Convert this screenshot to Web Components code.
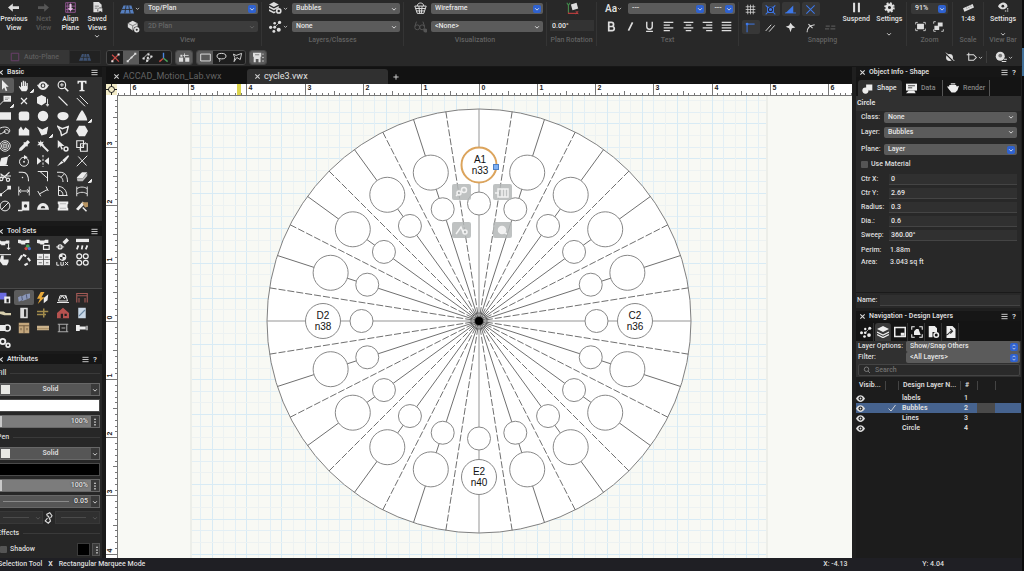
<!DOCTYPE html>
<html lang="en">
<head>
<meta charset="utf-8">
<title>cycle3.vwx</title>
<style>
  html, body { height: 100%; }
  body {
    margin: 0;
    overflow: hidden;
    background: linear-gradient(#0b0b0c 48px, #3f6f99 48px 76px, #0b0b0c 76px);
    color: #dedede;
    font: 500 7px/9px Roboto, "Liberation Sans", sans-serif;
  }
</style>
</head>
<body>
<cad-app></cad-app>

<script>
// ---------- icons, all on a 16x16 box ----------
const f = (d, c = "currentColor") => `<path fill="${c}" d="${d}"/>`;
const s = (d, w = 1.5, c = "currentColor") => `<path fill="none" stroke="${c}" stroke-width="${w}" d="${d}"/>`;
const dot = (x, y, r, c = "currentColor") => `<circle cx="${x}" cy="${y}" r="${r}" fill="${c}"/>`;
const ring = (x, y, r, w = 1.5, c = "currentColor") => `<circle cx="${x}" cy="${y}" r="${r}" fill="none" stroke="${c}" stroke-width="${w}"/>`;

const ICONS = {
  chev: s("M3 6l5 5 5-5", 2.4),
  updown: s("M4 6l4-4 4 4M4 10l4 4 4-4", 2),
  close: s("M3 3l10 10M13 3L3 13", 2.4),
  plus: s("M8 1v14M1 8h14", 2.6),
  menu: s("M1 3h14M1 8h14M1 13h14", 2),
  dots: dot(8, 2.5, 1.7) + dot(8, 8, 1.7) + dot(8, 13.5, 1.7),
  left: f("M0 8l7-6v4h9v4H7v4z"),
  right: f("M16 8L9 2v4H0v4h9v4z"),
  align: s("M1 1h14v14H1zM1 6h14M1 11h14M8 1v14M4 1v14", 1, "#b565b4") + f("M8 13l-4-4h2.500V3h3v6H12z", "#e9c7e8"),
  saved: f("M2 0h8l4 4v11H2z") + s("M4 6h6M4 9h4", 1, "#555") + dot(12, 12, 4, "#282828") + f("M9 9h6v6l-3-2-3 2z"),
  plane: f("M4 4h9l3 9H0z", "#567fc0") + s("M2 8.500h12M7 4L5.500 13M10 4l1.500 9", 1, "#282828"),
  cube: f("M7 1l6 3v5l-6 4-6-4V4z") + dot(12, 12, 4, "#282828") + ring(12, 12, 2.3, 2) + s("M1 4l6 3 6-3M7 7v6", .8, "#555"),
  layers: f("M6 0l6 3-6 3-6-3z") + f("M0 5l6 3 6-3v2l-6 3-6-3z") + f("M0 9l6 3 2-1v2l-2 1-6-3z") + ring(12, 11, 2.5, 2),
  classes: dot(2, 9, 2) + dot(7, 4, 1.600) + dot(13, 3, 2) + dot(7, 9, 1.800) + dot(6, 14, 1.800) + dot(12, 12, 2.500) + s("M7 9L13 3", .8),
  basket: s("M1 5h14l-3 9H4zM2 8h12M3 11h10M6 5l1 9M10 5L9 14M4 5c0-5 8-5 8 0", 1.2),
  glasses: ring(4, 9, 3, 1.200) + ring(10, 9, 3, 1.200) + s("M1 8l2-6M13 8l-2-6", 1.200) + dot(14, 13, 2.500),
  axes: s("M3 3v11h12", 1.300, "#b33b3b") + s("M3 13V3M1 1l2 3 2-3", 1.300, "#3f8c4c") + f("M6 3l7-2 2 7-7 2z") + s("M12 11l3 4M15 11l-3 4", 1, "#c04444"),
  grid: s("M4 1v14M8 1v14M12 1v14M1 4h14M1 8h14M1 12h14", 1.100),
  snapObj: f("M3 4h10v9H3z", "#3d78e8") + ring(8, 8, 3, 1.500, "#223") + s("M1 2l3 3M15 2l-3 3M1 15l3-3M15 15l-3-3", 1.500, "#3d78e8"),
  snapAngle: f("M1 13L12 2v11z", "#3d78e8") + s("M0 13h16", 1.200, "#3d78e8"),
  snapX: s("M2 2l12 12M14 2L2 14", 1.500, "#3d78e8"),
  snapPt: s("M3 15V3h11", 1.400, "#3d78e8") + dot(3, 3, 2, "#3d78e8"),
  slashes: s("M1 13L9 4M6 14l8-9", 1.400),
  star: f("M8 1l3 4 4 3-5 1-2 6-2-6-5-2 5-2z"),
  tangent: s("M3 15C3 8 7 5 14 4M5 3l6 6", 1.500),
  dashes: s("M1 6h6M9 6h6M0 10h6M8 10h7", 1.800),
  pause: f("M3 1h3v14H3zM10 1h3v14h-3z"),
  gear: `<circle cx="8" cy="8" r="6.200" fill="none" stroke="currentColor" stroke-width="3" stroke-dasharray="2.600 2.270"/>` + ring(8, 8, 4, 3.500),
  fit: f("M3 4h10v8H3z") + s("M1 5V2h3M12 2h3v3M15 11v3h-3M4 14H1v-3", 1.200),
  fitSel: f("M7 2h7v6H7zM2 7h7v6H2z") + s("M1 4V1h3M12 15h3v-3M1 12v3h3", 1.200),
  ruler: f("M0 9L14 3l2 5L2 14z") + s("M5 8l1 2M8 7l1 2M11 5l1 2", .8, "#555"),
  eyeCog: f("M0 6c4-7 12-7 14 0-3 6-11 6-14 0z") + dot(7, 6, 2, "#282828") + s("M10 13h2M13 13h2M13 10h2", 1.500),
  bold: s("M4 2v12h5a3 3 0 000-6H4h4a3 3 0 000-6z", 2.500),
  slash: s("M11 2L5 14", 2.400),
  under: s("M4 1v7a4 4 0 008 0V1M3 15h10", 2),
  al: s("M1 2h14M1 6h9M1 10h14M1 14h9", 1.500),
  ac: s("M1 2h14M4 6h8M1 10h14M4 14h8", 1.500),
  ar: s("M1 2h14M6 6h9M1 10h14M6 14h9", 1.500),
  aj: s("M1 2h14M1 6h14M1 10h14M1 14h14", 1.500),
  autoPlane: s("M2 2h12v12H2z", 1.500, "#6b3f6b"),
  noSnap: s("M2 14L12 4M3 4l10 10", 1.800, "#c94b45") + f("M11 2h3v3h-3zM2 12h3v3H2z"),
  oneSnap: s("M3 13L13 3", 1.500) + f("M1 12h3v3H1zM12 1h3v3h-3z") + dot(8, 8, 1.500),
  multi: s("M1 10L10 1M6 15l9-9", 1.200) + f("M1 8h3v3H1zM8 2h3v3H8zM6 11h3v3H6zM12 5h3v3h-3zM7 7h3v3H7z"),
  triad: s("M8 1v8", 2, "#4a86e0") + s("M8 9l-6 5", 2, "#c94b45") + s("M8 9l6 5", 2, "#4aa35a"),
  modeA: f("M0 8h6v6H0zM9 8h6v6H9zM2 4h3v3H2z") + s("M8 2v6M6 5h8", 1.200),
  marquee: s("M1 3h14v10H1z", 1.400),
  lasso: `<ellipse cx="8" cy="6" rx="6.500" ry="4" fill="none" stroke="currentColor" stroke-width="1.400"/>` + s("M5 9c-2 2 2 2 0 5", 1.300),
  polyLasso: s("M2 3l4 2 8-3-2 9-5-3-4 6 1-6z", 1.300),
  modeB: f("M0 1h12v6h-1v8H8v-5H4v5H1V7H0z") + s("M3 4h6", 1, "#5a5a5a") + dot(14.500, 3, 1) + dot(14.500, 8, 1) + dot(14.500, 13, 1),
  noEye: dot(8, 8, 5) + s("M1 1l14 14", 2, "#282828") + s("M3 1l12 12", 1.400),
  tagRect: s("M4 4h7l4 4-4 4H4zM4 1v4M1 4h3", 1.500),
  coin: dot(7, 7, 6) + dot(7, 6, 2.500, "#777") + s("M9 14h6M12 11h4", 1.500),
  // basic palette
  arrow: f("M4 0v13l3-3 2 5 2-1-2-5h4z"),
  hand: f("M5 15L1 9l1-1 2 2V3h1.500v5h.8V1h1.800v7h.8V2h1.700v6h.8V4h1.600v8l-2 3z"),
  orbit: f("M1 8c3-8 11-8 14 0-3 7-11 7-14 0z") + ring(8, 7.500, 2.500, 1.500, "#333") + s("M0 6c3 7 13 7 16 0", 1),
  zoom: ring(6.500, 6.500, 5) + s("M10 10l5 5", 2.200) + s("M4 6.500h5M6.500 4v5", 1.200),
  text: f("M2 1h12v4h-1.500L12 3H9.500v10l2 .5V15h-7v-1.500l2-.5V3H4l-.5 2H2z"),
  callout: f("M6 1h10v8H6z") + s("M8 4h6M8 6h4", 1, "#888") + s("M6 8L0 14", 1.200),
  locus: s("M4 4l8 8M12 4l-8 8", 1.600),
  push: f("M6 0l6 3v7l-6 4-6-3V3z") + s("M14 5v9M12 12l2 3 2-3", 1.200),
  line: s("M2 2l12 12", 1.500),
  dline: s("M1 4l11 11M5 1l11 11", 1.300),
  rect: f("M0 3h16v10H0z"),
  rrect: `<rect x="1" y="2" width="14" height="12" rx="3.500" fill="currentColor"/>`,
  circle: dot(8, 8, 7),
  ellipse: `<ellipse cx="8" cy="8" rx="7.500" ry="5.500" fill="currentColor"/>`,
  tri: f("M8 0c2 2 7 10 7 14H0C2 10 5 3 8 0z"),
  spiral: s("M0 5c8-5 16-1 14 4-2 4-8 2-7-1s6-2 6 1M1 12c4 0 5-4 8-3", 1.300),
  freeform: f("M1 14V6l3-4 3 5 3-4 5 4v7z"),
  poly: f("M0 2l7 4 8-4-2 10-7 2z"),
  dpoly: s("M1 2l6 3 8-3-2 8-7 4-1-5z", 1.900),
  hexagon: f("M4 1h8l4 7-4 7H4L0 8z"),
  rings: ring(8, 8, 7, 1.200) + ring(8, 8, 4.800, 1.200) + ring(8, 8, 2.600, 1.200) + dot(8, 8, 1),
  dropper: f("M1 15l1-4 6-6 3 3-6 6zM8 3l2 0 3-3 3 3-3 3v2l-1 1-5-5z"),
  wand: s("M5 5l10 10", 2.400) + f("M5 0l1 3 3-1-1.500 3L10 7H6L5 10 4 7H0l2.500-2L1 2l3 1z"),
  pickEye: f("M1 0v11l3-3 2 5 2-1-2-4h4z") + ring(12, 12, 2.600, 2),
  clip: s("M1 1h9v9H1zM6 5h9v10H6z", 1.500) + s("M4 13L13 3", 1),
  shear: f("M3 4l9-2-2 11-10 1z") + s("M0 14h12M12 2l3-2", 1.300),
  rotate: ring(8, 9, 6, 1.300) + f("M8 0l5 3-5 3z") + dot(8, 9, 1.200),
  mirror: f("M0 3l6 5-6 5zM16 3l-6 5 6 5z") + s("M8 0v3M8 5v3M8 10v3M8 15v1", 1.300),
  knife: f("M0 15L6 8l3 2zM7 7L15 0l1 2-6 8z"),
  trim: s("M1 15L15 1M3 2l11 12", 1.300),
  scissors: ring(3, 12, 2.200, 1.500) + ring(12, 13, 2.200, 1.500) + s("M5 11L14 3M10 11L2 5M2 8h14", 1.500),
  fillet: s("M1 3h5c6 0 8 4 8 12", 1.400) + dot(6, 10, 1),
  chamfer: s("M1 2h13v13M4 2l10 9", 1.300),
  offset: s("M0 3h4c7 0 10 5 10 13M1 8c4 0 7 3 7 8M5 10l5-5", 1.300),
  eraser: f("M1 10l7-7h7l-6 8H2z") + f("M1 11h8l6-7v4l-6 7H2z", "#bbb"),
  edit: s("M2 13L12 5", 1.300) + f("M0 11h4v4H0zM11 1h5v5h-5z"),
  dim: s("M1 2v12M15 2v12M1 8h14M4 5.500L1.500 8 4 10.500M12 5.500L14.500 8 12 10.500", 1.200),
  dimA: s("M1 8l4 7M12 2l3 6M3 12l11-6", 1.300),
  protract: s("M2 1v13h12M2 2c6 0 11 5 11 12M2 7c4 0 6 3 6 7", 1.300),
  arcDim: s("M1 2v13M15 2v13M1 5c4-3 10-3 14 0M1 12c4-3 10-3 14 0", 1.200),
  diam: ring(8, 8, 6.500, 1.300) + s("M3 13L13 3", 1.300),
  tape: f("M5 2h10v12H5z") + s("M0 14h6", 2) + dot(10, 8, 2.200, "#333"),
  half: f("M0 13a8 9 0 0116 0z") + f("M5 11a3 3 0 016 0z", "#333"),
  film: f("M1 2h14v3l-1 1v4l1 1v3H1v-3l1-1V6L1 5z") + s("M4 5h8M4 11h8", .8, "#999"),
  brush: f("M0 12L9 2l3 3-9 9z") + f("M8 3h8v6l-4 1z", "#b79462") + s("M9 10l5 5", 1.800),
  // tool sets
  light: f("M0 3h3l1 1h5l1-1h4v4H9v2H4V8L0 7z") + s("M13 7v7M11 12l2 2 2-2", 1.300),
  lightC: f("M0 2h3l1 1h5l1-1h4v4H9v2H4V7L0 6z") + dot(12, 10, 2.200, "#4aa35a") + dot(10, 13, 2, "#d34a41") + dot(14, 13, 2, "#4a76d8"),
  lightT: f("M0 2h3l1 1h5l1-1h4v4H9v2H4V7L0 6z") + s("M8 9h7v5H8z", 1.500),
  focus: f("M8 5l5-5 3 3-5 5z") + ring(5, 11, 2.500, 1.500) + s("M0 11h10", 1),
  bar: f("M0 1h16v4H0z") + s("M3 9L1 14M8 9l-1 5M14 9l-2 5", 2.200),
  point: f("M4 3h3v5h6v3l-2 4H6L2 10z") + s("M0 2h16", 1.200),
  lnk: s("M1 9l4-6M6 2l4 2M12 6l3 4M12 13l-4 2", 2.600),
  panelLux: f("M0 1h16v14H0z") + s("M8 1v14M0 8h16M2 5h4M10 5h4M2 12h4M11 12h3", 1, "#555"),
  lux: ring(8, 5, 4, 1.400) + f("M8 1v4h4a4 4 0 01-4 4V5H4a4 4 0 014-4z") + s("M1 11v4h3M6 11v4h3v-4M11 11l4 4M15 11l-4 4", 1.200),
  spools: ring(4, 4, 3) + ring(12, 4, 3) + ring(4, 12, 3) + ring(12, 12, 3),
  plan: f("M0 1h10v9H0z", "#6a6be0") + f("M7 6h8v9H7z") + f("M10 9h3v5h-3z", "#222"),
  spot: f("M0 7l4-2 1 1 5-3 6-1v6l-5 2-5 2-1-1-4 2z", "#8b97b8") + s("M5 6l1 5M11 3l1 6", 1, "#3d4663"),
  bolt: f("M5 0L0 9h4l-3 7 9-9H6l4-7z", "#e8a93a") + f("M9 8l6-5-1 8-5 4z"),
  truss: s("M2 12h12l-2-7H4zM0 14h16M4 9l3-4 3 4 2-4", 1.300),
  stage: s("M1 14V2h14v12M1 5h14M4 14V8M12 14V8", 1.500, "#a35a56"),
  cable: f("M0 6h6l3 2h7v3H7L0 9z", "#d8cfae"),
  door: f("M3 1h10v14H3z", "#ddd") + f("M8 3h3v10H8z", "#333"),
  pipe: s("M0 6h15M0 10h12M9 2v12", 2, "#a38c4c"),
  house: f("M0 8l8-7 8 7v7H0z", "#b5524f") + f("M5 9h3v6H5zM10 9h3v3h-3z", "#222"),
  glass: f("M3 1h10v14H3z", "#c9d7e6") + s("M4 12L12 4", 1.500, "#6b87a3"),
  cam: f("M0 4h9v8H0z") + ring(11, 8, 4, 2),
  cab: f("M1 1h14v14H1z", "#c3a67c") + s("M1 5h14M8 5v10M4 8v3M12 8v3", 1, "#5a4630"),
  beam: f("M0 5h16v6H0z", "#cbb38c") + s("M0 9h16", 1, "#967a52"),
  ibeam: s("M1 3h14M1 13h14M3 3v10M13 3v10M6 8h5", 1.500, "#a9a9a9"),
  bolt2: f("M0 4h5v8H0zM5 6h8v4H5z") + f("M13 5h3v6h-3z", "#999"),
  gears: ring(5, 6, 3.500, 2.500) + ring(12, 11, 2.500, 2.200),
  chain: s("M6 6L5 3l4-2 3 4-2 3M6 8l-3 4 4 3 3-3-1-3M7 5l3 7", 1.500),
  // object info + navigation
  shapes: dot(5, 11, 4.500) + f("M6 2h9v9h-5l-4-4z"),
  data: f("M0 1h16v10H0z") + s("M3 4h10M3 7h6", 1.200, "#222") + f("M4 11h8l2 4H0z"),
  teapot: f("M3 4h9l1 2 3-1-2 6-3 3H6L2 9 0 6h3z") + s("M5 2.500h6", 1.500),
  stack: f("M8 0l8 4-8 4-8-4z") + s("M0 8l8 4 8-4M0 11.500l8 4 8-4", 1.600),
  sheet: s("M1 2h14v12H1z", 2) + f("M9 9h5v4H9z"),
  vport: s("M1 5V1h4M11 1h4v4M15 11v4h-4M5 15H1v-4", 1.400) + f("M4 12V7l3-3h3l3 8z"),
  docEye: f("M1 0h8l3 3v5H6v7H1z") + ring(11, 12, 3, 2),
  docRef: f("M2 0h8l4 4v12H2z") + s("M1 12c5 0 4-5 8-5M7 4l3 3-3 3", 1.500, "#333"),
  search: ring(7, 6.500, 4.500, 1.400) + s("M10 10l4 4", 1.400),
  eye: f("M0 8c4-8 12-8 16 0-4 8-12 8-16 0z") + dot(8, 8, 3.600, "#1c1c1c") + dot(8, 8, 1.600),
  check: s("M1 9l5 5L15 2", 1.800)
};

class CadElement extends HTMLElement {
  constructor() {
    super();
    this.attachShadow({ mode: "open" });
  }

  connectedCallback() {
    this.shadowRoot.innerHTML = `<style>* { box-sizing: border-box; }</style>${this.html()}`;
  }

  attr(name, fallback = "") {
    return this.getAttribute(name) || fallback;
  }
}

class CadIcon extends CadElement {
  html() {
    const size = this.attr("size", "12");
    return `
      <style>
        :host { display: inline-flex; flex: none; }
        svg { display: block; }
      </style>
      <svg width="${size}" height="${size}" viewBox="0 0 16 16" aria-hidden="true">${ICONS[this.attr("name")]}</svg>`;
  }
}

const icon = (name, size = 12) => `<cad-icon name="${name}" size="${size}"></cad-icon>`;

class DropField extends CadElement {
  html() {
    const accent = this.hasAttribute("accent");
    return `
      <style>
        :host { display: grid; min-width: 0; height: 11px; }
        select, cad-icon { grid-area: 1 / 1; }
        select {
          appearance: none;
          width: 100%;
          min-width: 0;
          border: 0;
          border-radius: 2px;
          padding: 0 10px 0 4px;
          background: var(--field, #5b5b5b);
          color: #e6e6e6;
          font: inherit;
        }
        select:disabled { background: #3c3c3c; color: #666; opacity: 1; }
        cad-icon {
          justify-self: end;
          align-self: center;
          margin-right: 2px;
          padding: 1px;
          border-radius: 2px;
          pointer-events: none;
          color: ${this.hasAttribute("disabled") ? "#666" : "#e6e6e6"};
          background: ${accent ? "#2f62d0" : "none"};
        }
      </style>
      <select aria-label="${this.attr("label")}" ${this.hasAttribute("disabled") ? "disabled" : ""}>
        <option>${this.attr("value").replace(/</g, "&lt;")}</option>
      </select>
      ${icon(this.attr("mark", "chev"), 6)}`;
  }
}

class RibbonGroup extends CadElement {
  html() {
    return `
      <style>
        :host {
          display: grid;
          grid-template-rows: minmax(0, 1fr) 10px;
          min-width: 0;
          height: 44px;
          border-right: 1px solid #343434;
        }
        .label { display: flex; justify-content: center; color: #626262; white-space: nowrap; }
      </style>
      <slot></slot>
      <div class="label">${this.attr("label")}</div>`;
  }
}

class RibbonButton extends CadElement {
  html() {
    return `
      <style>
        :host { display: block; min-width: 0; }
        button {
          display: flex;
          flex-direction: column;
          align-items: center;
          width: 100%;
          border: 0;
          padding: 0;
          background: none;
          color: inherit;
          font: inherit;
          font-weight: 600;
          line-height: 9px;
          white-space: nowrap;
        }
        .top { margin: 0 0 2px; }
        .gap { height: 7px; }
        .more { height: 4px; }
      </style>
      <button ${this.hasAttribute("disabled") ? "disabled" : ""}>
        <cad-icon class="top" name="${this.attr("icon")}" size="11"></cad-icon>
        <slot></slot>
        ${this.hasAttribute("spaced") ? `<span class="gap"></span>` : ""}
        ${this.hasAttribute("more") ? `<cad-icon class="more" name="chev" size="6"></cad-icon>` : ""}
      </button>`;
  }
}

class RibbonBar extends CadElement {
  tool(name, on = false, label = name) {
    return `<button class="tool ${on ? "on" : ""}" aria-label="${label}">${icon(name, 11)}</button>`;
  }

  html() {
    return `
      <style>
        :host {
          display: grid;
          grid-template-columns: 114fr 148fr 142fr 143fr 50fr 142fr 168fr 46fr 31fr 38fr;
          height: 48px;
          padding-top: 2px;
          background: #282828;
        }
        ribbon-group:last-child { border: 0; }
        .views { display: grid; grid-template-columns: 28fr 32fr 22fr 32fr; }
        .views [disabled] { color: #565656; }
        .pair { display: grid; grid-template-columns: 24px 1fr; gap: 7px 4px; align-content: start; align-items: center; padding: 1px 3px 0 2px; }
        .pair.wide { grid-template-columns: 21px 1fr; }
        .ico { display: flex; align-items: center; justify-content: flex-end; gap: 1px; height: 11px; }
        .dim { color: #555; }
        .rot { display: flex; flex-direction: column; align-items: center; gap: 5px; padding: 0 2px 0 3px; }
        .rot input { width: 100%; height: 11px; border: 0; padding: 0 2px; background: #333; color: #e6e6e6; font: inherit; }
        .text { display: flex; flex-direction: column; gap: 5px; padding: 1px 3px 0 8px; }
        .text .fonts { display: grid; grid-template-columns: 19px 80fr 25fr; gap: 4px; }
        .aa { display: flex; align-items: center; font-size: 10px; font-weight: 600; line-height: 11px; }
        .marks { display: flex; justify-content: space-between; padding-right: 2px; }
        button { border: 0; padding: 0; background: none; color: inherit; font: inherit; }
        .tool { display: grid; place-items: center; height: 14px; border-radius: 2px; }
        .marks .tool { width: 12px; }
        .on { background: #373737; }
        .snap { display: grid; grid-template-columns: 97fr 33fr 33fr; padding-left: 3px; }
        .snap .tools { display: grid; grid-template-columns: repeat(5, 1fr); gap: 4px 2px; align-content: start; }
        .zoom { padding: 1px 4px 0; }
        .zoom drop-field { --field: #383838; }
        .zoom div { display: flex; justify-content: space-around; padding-top: 5px; }
      </style>
      <ribbon-group>
        <div class="views">
          <ribbon-button icon="left">Previous<br>View</ribbon-button>
          <ribbon-button icon="right" disabled>Next<br>View</ribbon-button>
          <ribbon-button icon="align">Align<br>Plane</ribbon-button>
          <ribbon-button icon="saved" more>Saved<br>Views</ribbon-button>
        </div>
      </ribbon-group>
      <ribbon-group label="View">
        <div class="pair">
          <span class="ico">${icon("plane", 14)}${icon("chev", 5)}</span>
          <drop-field label="Standard view" value="Top/Plan" accent></drop-field>
          <span class="ico">${icon("cube", 13)}</span>
          <drop-field label="Projection" value="2D Plan" disabled></drop-field>
        </div>
      </ribbon-group>
      <ribbon-group label="Layers/Classes">
        <div class="pair">
          <span class="ico">${icon("layers", 13)}${icon("chev", 5)}</span>
          <drop-field label="Active layer" value="Bubbles"></drop-field>
          <span class="ico">${icon("classes", 13)}${icon("chev", 5)}</span>
          <drop-field label="Active class" value="None"></drop-field>
        </div>
      </ribbon-group>
      <ribbon-group label="Visualization">
        <div class="pair wide">
          <span class="ico">${icon("basket", 13)}</span>
          <drop-field label="Render mode" value="Wireframe" accent></drop-field>
          <span class="ico dim">${icon("glasses", 13)}</span>
          <drop-field label="Data visualization" value="<None>"></drop-field>
        </div>
      </ribbon-group>
      <ribbon-group label="Plan Rotation">
        <div class="rot">
          ${icon("axes", 13)}
          <input aria-label="Plan rotation angle" value="0.00°">
        </div>
      </ribbon-group>
      <ribbon-group label="Text">
        <div class="text">
          <div class="fonts">
            <span class="aa">Aa${icon("chev", 5)}</span>
            <drop-field label="Font" value="---" accent></drop-field>
            <drop-field label="Font size" value="---" accent></drop-field>
          </div>
          <div class="marks">
            ${["bold", "slash", "under", "al", "ac", "ar", "aj"].map(n => this.tool(n)).join("")}
          </div>
        </div>
      </ribbon-group>
      <ribbon-group label="Snapping">
        <div class="snap">
          <div class="tools">
            ${this.tool("grid")}${this.tool("snapObj", true)}${this.tool("snapAngle", true)}${this.tool("snapX", true)}<span></span>
            ${this.tool("snapPt", true)}${this.tool("slashes")}${this.tool("star")}${this.tool("tangent")}<span class="tool dim">${icon("dashes", 11)}</span>
          </div>
          <ribbon-button icon="pause">Suspend</ribbon-button>
          <ribbon-button icon="gear" more spaced>Settings</ribbon-button>
        </div>
      </ribbon-group>
      <ribbon-group label="Zoom">
        <div class="zoom">
          <drop-field label="Zoom" value="91%" accent></drop-field>
          <div>${this.tool("fit")}${this.tool("fitSel")}</div>
        </div>
      </ribbon-group>
      <ribbon-group label="Scale">
        <ribbon-button icon="ruler">1:48</ribbon-button>
      </ribbon-group>
      <ribbon-group label="View Bar">
        <ribbon-button icon="eyeCog" more spaced>Settings</ribbon-button>
      </ribbon-group>`;
  }
}

class ModeBar extends CadElement {
  html() {
    const set = (names, on) => `
      <div class="set">
        ${names.map(n => `<button class="${n === on ? "on" : ""}" aria-label="${n}">${icon(n, 11)}</button>`).join("")}
      </div>`;
    return `
      <style>
        :host { display: flex; align-items: center; gap: 3px; height: 19px; padding: 0 9px 0 0; border-bottom: 1px solid #161616; background: #282828; }
        .set { display: flex; border: 1px solid #484848; border-radius: 3px; overflow: hidden; height: 15px; }
        button { display: grid; place-items: center; width: 16px; border: 0; padding: 0; background: #1e1e1e; color: inherit; font: inherit; }
        button.on { background: #5a5a5a; }
        .auto { display: flex; color: #5d5d5d; margin-right: 2px; height: 14px; }
        .auto button:first-child { grid-auto-flow: column; justify-content: center; gap: 4px; width: 69px; background: #363636; }
        .auto button:last-child { width: 32px; border: 1px solid #333; opacity: .5; }
        .space { flex: 1; }
        .right { display: flex; align-items: center; gap: 1px; padding-left: 8px; }
        .right:last-child { border-left: 1px solid #3c3c3c; }
      </style>
      <div class="auto">
        <button>${icon("autoPlane", 10)}Auto-Plane</button>
        <button aria-label="Working plane">${icon("plane", 12)}</button>
      </div>
      ${set(["noSnap", "oneSnap", "multi", "triad"], "oneSnap")}
      ${set(["modeA"], "modeA")}
      ${set(["marquee", "lasso", "polyLasso"], "marquee")}
      ${set(["modeB"], "modeB")}
      <span class="space"></span>
      <span class="right">${icon("noEye", 11)}</span>
      <span class="right">${icon("tagRect", 11)}${icon("chev", 5)}</span>
      <span class="right">${icon("coin", 12)}${icon("chev", 5)}</span>`;
  }
}

class DockPanel extends CadElement {
  html() {
    return `
      <style>
        :host { display: block; }
        header { display: flex; align-items: center; gap: 3px; height: 10px; padding: 0 4px 0 3px; background: #161616; }
        h2 { flex: 1; margin: 0; font: inherit; font-weight: 600; }
        .help { width: 6px; font-size: 8px; font-weight: 600; text-align: center; }
      </style>
      <header>
        ${icon("close", 7)}
        <h2>${this.attr("label")}</h2>
        ${icon("menu", 7)}
        ${this.hasAttribute("help") ? `<span class="help">?</span>` : ""}
      </header>
      <slot></slot>`;
  }
}

class ToolGrid extends CadElement {
  html() {
    const active = this.attr("active");
    const corner = this.attr("fly").split(" ");
    return `
      <style>
        :host { display: grid; grid-template-columns: repeat(5, 1fr); grid-auto-rows: 15px; padding: 1px 10px 0 1px; }
        button { display: grid; place-items: center; border: 0; padding: 0; border-radius: 2px; background: none; color: #ececec; }
        button.on { background: #5c5c5c; }
        button.fly { background: linear-gradient(135deg, transparent 50%, #ececec 50%) right bottom / 4px 4px no-repeat; }
      </style>
      ${this.attr("tools").split(" ").map(n => `
        <button class="${n === active ? "on" : ""} ${corner.includes(n) ? "fly" : ""}" aria-label="${n}">${icon(n, this.attr("size", "12"))}</button>`).join("")}`;
  }
}

class AttributePane extends CadElement {
  fillRows(name, color) {
    return `
      <h3>${name}</h3>
      <div class="row"><i class="chip"></i><select aria-label="${name} style"><option>Solid</option></select><span class="end">${icon("chev", 6)}</span></div>
      <button class="bar" style="background:${color}" aria-label="${name} color"></button>
      <div class="row light"><i class="knob"></i><output>100%</output><span class="end">${icon("dots", 8)}</span></div>`;
  }

  html() {
    return `
      <style>
        :host { display: grid; grid-auto-rows: 13px; gap: 3px; padding: 3px 2px 2px 3px; }
        h3 { display: flex; align-items: center; gap: 4px; margin: 0; font: inherit; }
        h3::after { content: ""; flex: 1; height: 1px; background: #3a3a3a; }
        .row { display: flex; align-items: center; border: 1px solid #686868; background: #565656; }
        .light { background: #7c7c7c; }
        .chip { width: 9px; height: 9px; margin-left: 3px; background: #e8e8e4; }
        .knob { width: 4px; height: 11px; background: #c8c8c8; }
        select { flex: 1; min-width: 0; appearance: none; border: 0; padding: 0; background: none; color: inherit; font: inherit; font-weight: 600; text-align: center; text-align-last: center; }
        output { flex: 1; padding-right: 3px; text-align: right; font-weight: 600; text-shadow: 0 0 2px #222; }
        .end { display: grid; place-items: center; width: 8px; height: 11px; background: #3a3a3a; }
        .bar { width: 100%; border: 1px solid #4a4a4a; padding: 0; }
        .rule { flex: 1; height: 1px; margin: 0 5px; background: #8a8a8a; }
        .weight output { flex: none; }
        .ends { display: grid; grid-template-columns: 1fr 12px 1fr; align-items: center; }
        .ends .row { height: 13px; border-color: #383838; background: #303030; color: #5a5a5a; }
        .ends .rule { background: #4b4b4b; }
        .ends .end { background: none; }
        .shadow { display: flex; align-items: center; gap: 2px; }
        label { flex: 1; display: flex; align-items: center; gap: 3px; }
        input { appearance: none; width: 7px; height: 7px; margin: 0 0 0 3px; border-radius: 1px; background: #555; }
        .swatch { width: 13px; height: 13px; border: 1px solid #3b3b3b; padding: 0; background: #000; }
        .shadow .end { height: 13px; border: 1px solid #555; }
      </style>
      ${this.fillRows("Fill", "#fff")}
      ${this.fillRows("Pen", "#000")}
      <div class="row weight"><span class="rule"></span><output>0.05</output><span class="end">${icon("chev", 6)}</span></div>
      <div class="ends">
        <div class="row"><span class="rule"></span><span class="end">${icon("chev", 6)}</span></div>
        ${icon("chain", 12)}
        <div class="row"><span class="rule"></span><span class="end">${icon("chev", 6)}</span></div>
      </div>
      <h3>Effects</h3>
      <div class="shadow">
        <label><input type="checkbox">Shadow</label>
        <button class="swatch" aria-label="Shadow color"></button>
        <span class="end">${icon("dots", 8)}</span>
      </div>`;
  }
}

class FileTabs extends CadElement {
  html() {
    return `
      <style>
        :host { display: flex; height: 17px; padding-top: 2px; background: #121212; font-size: 9px; font-weight: 400; }
        a { display: flex; align-items: center; gap: 3px; width: 141px; padding-left: 7px; color: #626262; text-decoration: none; border-radius: 3px 3px 0 0; }
        a.on { background: #303030; color: #e2e2e2; }
        cad-icon { color: #d0d0d0; }
        button { display: grid; place-items: center; border: 0; padding: 0 5px; background: none; color: inherit; }
      </style>
      <a href="#lab">${icon("close", 7)}ACCAD_Motion_Lab.vwx</a>
      <a href="#cycle3" class="on">${icon("close", 7)}cycle3.vwx</a>
      <button aria-label="New file">${icon("plus", 6)}</button>`;
  }
}

// one metre of the drawing in screen units, origin at the middle of the view
const UNIT = 58.15;

class DrawingView extends CadElement {
  grid() {
    const tone = ["#e3eff5", "#edf2f2", "#d8ebf5"];
    let out = "";
    for (let k = -24; k <= 24; k++) {
      const p = Math.round(k * UNIT / 5) + 0.5;
      out += `<path stroke="${tone[Math.abs(k) % 3]}" d="M${p} -600V600"/>`;
      out += `<path stroke="${tone[Math.abs(k) % 3]}" d="M-288 ${p}H288"/>`;
    }
    return out + `<path stroke="#eceee9" stroke-width="2" d="M-288 -600V600M288 -600V600"/>`;
  }

  wheel() {
    let lines = "";
    let bubbles = "";
    for (let i = 0; i < 40; i++) {
      const a = i * Math.PI / 20;
      const x = Math.sin(a);
      const y = -Math.cos(a);
      const style = i % 2 ? `stroke="#707070" stroke-dasharray="7 2"` : i % 10 ? `stroke="#707070"` : `stroke="#959595"`;
      lines += `<path ${style} d="M${x * 212} ${y * 212}L0 0"/>`;
      if (i % 2 === 0) {
        bubbles += `<circle cx="${x * 156}" cy="${y * 156}" r="17.500"/><circle cx="${x * 117.5}" cy="${y * 117.5}" r="11.500"/>`;
      }
    }
    return `
      <circle r="212" fill="#fff" stroke="#808080"/>
      ${lines}
      <g fill="#fff" stroke="#888">${bubbles}</g>
      <circle r="9" fill="#000" opacity=".2"/><circle r="4" fill="#000"/>`;
  }

  label(x, y, a, b) {
    return `<text x="${x}" y="${y - 2}">${a}</text><text x="${x}" y="${y + 9}">${b}</text>`;
  }

  badge(x, y, glyph) {
    return `<g transform="translate(${x} ${y})"><rect width="19" height="16" rx="2" fill="#b4b7b7" opacity=".85"/>
      <g fill="none" stroke="#f2f2f2" stroke-width="1.500">${glyph}</g></g>`;
  }

  ticks(axis) {
    let out = "";
    for (let k = -70; k <= 70; k++) {
      const p = Math.round(k * UNIT / 10) + 0.5;
      const len = k % 10 === 0 ? 11 : k % 5 === 0 ? 4 : 2;
      const n = Math.abs(k / 10);
      if (axis === "x") {
        out += `<path d="M${p} ${11 - len}V11"/>`;
        if (k % 10 === 0) out += `<text x="${p + 2}" y="6">${n}</text>`;
      } else {
        out += `<path d="M${11 - len} ${p}H11"/>`;
        if (k % 10 === 0) out += `<text transform="translate(6 ${p - 2}) rotate(-90)">${n}</text>`;
      }
    }
    return out;
  }

  html() {
    return `
      <style>
        :host { display: block; min-height: 0; overflow: hidden; background: #f8f9f4; }
        svg { display: block; overflow: hidden; }
        .mid { overflow: visible; }
        .names { font: 400 10px "Liberation Sans", sans-serif; fill: #111; text-anchor: middle; }
        .ruler text { font: 700 7px "Liberation Sans", sans-serif; fill: #222; stroke: none; }
      </style>
      <svg width="100%" height="100%" role="img" aria-label="Drawing">
        <svg class="mid" x="50%" y="50%">
          <g>${this.grid()}</g>
          ${this.wheel()}
          ${this.badge(-27, -137, `<circle cx="7" cy="9" r="2"/><circle cx="12" cy="6" r="2.500"/><path d="M4 12l2-2"/>`)}
          ${this.badge(14, -137, `<path d="M5 5h10v8H5zM9 5v8M12 5v8M2 9h4"/>`)}
          ${this.badge(-27, -99, `<path d="M4 12l5-7 2 5"/><circle cx="13" cy="10" r="2"/>`)}
          ${this.badge(14, -99, `<circle cx="9" cy="8" r="3.500" fill="#f2f2f2"/><path d="M10 10l4 2"/>`)}
          <circle cx="0" cy="-156" r="17.500" fill="#fff" stroke="#dca45c" stroke-width="2"/>
          <rect x="14.500" y="-156.500" width="5" height="5" fill="#7fb0f2" stroke="#4e7fc4"/>
          <g class="names">
            ${this.label(1, -156, "A1", "n33")}
            ${this.label(156, 0, "C2", "n36")}
            ${this.label(0, 156, "E2", "n40")}
            ${this.label(-156, 0, "D2", "n38")}
          </g>
        </svg>
        <g class="ruler" stroke="#777">
          <rect width="100%" height="11" fill="#fff" stroke="none"/>
          <svg class="mid" x="50%">${this.ticks("x")}</svg>
          <rect x="131" width="4" height="11" fill="#dcd44a" stroke="none"/>
          <rect width="11" height="100%" fill="#fff" stroke="none"/>
          <svg class="mid" y="50%">${this.ticks("y")}</svg>
          <path d="M11.500 11V2000M11 11.500H4000"/>
          <rect width="11" height="11" fill="#f3ecc8" stroke="none"/>
          <g stroke="#222" fill="none"><circle cx="5.500" cy="5.500" r="3"/><path d="M5.500 0v3M5.500 8v3M0 5.500h3M8 5.500h3"/></g>
        </g>
      </svg>`;
  }
}

class PropRow extends CadElement {
  html() {
    const kind = this.attr("kind", "input");
    const value = this.attr("value");
    const control = {
      select: `<drop-field label="${this.attr("label")}" value="${value}" mark="${this.attr("mark", "chev")}" ${this.hasAttribute("accent") ? "accent" : ""}></drop-field>`,
      input: `<input id="v" value="${value}">`,
      text: `<output id="v">${value}</output>`
    }[kind];
    return `
      <style>
        :host { display: grid; grid-template-columns: ${this.attr("cols", kind === "select" ? "23px 1fr" : "28px 1fr")}; align-items: center; min-height: 12px; }
        label { white-space: nowrap; }
        input { width: 100%; min-width: 0; height: 11px; border: 0; border-bottom: 1px solid #444; padding: 0 2px; background: #303030; color: #e6e6e6; font: inherit; }
        output { padding-left: 1px; }
      </style>
      <label ${kind === "select" ? "" : `for="v"`}>${this.attr("label")}</label>${control}`;
  }
}

class ObjectInfo extends CadElement {
  html() {
    return `
      <style>
        :host { display: flex; flex-direction: column; background: #282828; }
        nav { display: flex; height: 19px; padding: 3px 0 0 2px; background: #141414; }
        nav button { display: flex; align-items: center; gap: 4px; border: 0; padding: 0 4px; background: none; color: #858585; font: inherit; white-space: nowrap; }
        nav button cad-icon { color: #eee; }
        nav .on { width: 44px; border-radius: 3px 3px 0 0; background: #303030; color: #e2e2e2; }
        nav .data { width: 41px; border-right: 1px solid #555; }
        nav .render { border-right: 1px solid #555; }
        h3 { margin: 0; padding: 1px 1px 2px; background: #303030; font: inherit; font-weight: 700; line-height: 12px; }
        .props { display: grid; gap: 3px; padding: 0 4px 0 5px; }
        .plane { padding-top: 3px; }
        .use { display: flex; align-items: center; gap: 3px; height: 12px; }
        .use input { appearance: none; width: 7px; height: 7px; margin: 0; border-radius: 1px; background: #555; }
        .vals { display: grid; gap: 2px; }
        .read { display: grid; padding-top: 1px; }
        .name { margin-top: auto; padding: 2px 1px; border-top: 1px solid #1a1a1a; }
      </style>
      <nav>
        <button class="on">${icon("shapes", 11)}Shape</button>
        <button class="data">${icon("data", 11)}Data</button>
        <button class="render">${icon("teapot", 12)}Render</button>
      </nav>
      <h3>Circle</h3>
      <div class="props">
        <prop-row kind="select" label="Class:" value="None"></prop-row>
        <prop-row kind="select" label="Layer:" value="Bubbles"></prop-row>
        <prop-row class="plane" kind="select" label="Plane:" value="Layer" accent></prop-row>
        <label class="use"><input type="checkbox">Use Material</label>
        <div class="vals">
          <prop-row label="Ctr X:" value="0"></prop-row>
          <prop-row label="Ctr Y:" value="2.69"></prop-row>
          <prop-row label="Radius:" value="0.3"></prop-row>
          <prop-row label="Dia.:" value="0.6"></prop-row>
          <prop-row label="Sweep:" value="360.00°"></prop-row>
          <div class="read">
            <prop-row kind="text" label="Perim:" value="1.88m"></prop-row>
            <prop-row kind="text" label="Area:" value="3.043 sq ft"></prop-row>
          </div>
        </div>
      </div>
      <prop-row class="name" cols="23px 1fr" label="Name:"></prop-row>`;
  }
}

class NavigationPane extends CadElement {
  html() {
    const rows = [["labels", 1], ["Bubbles", 2], ["Lines", 3], ["Circle", 4]];
    return `
      <style>
        :host { display: flex; flex-direction: column; background: #1c1c1c; }
        nav { display: flex; gap: 1px; height: 20px; padding: 2px 0 0 2px; background: #141414; }
        nav button { display: grid; place-items: center; width: 16px; border: 0; border-right: 1px solid #333; padding: 0; background: none; color: #eee; }
        nav .on { border-radius: 3px 3px 0 0; background: #3a3a3a; }
        .opts { display: grid; grid-template-rows: 11px 11px 13px; padding: 0 1px 1px 2px; background: #303030; }
        .opts prop-row { min-height: 11px; }
        .search { display: flex; align-items: center; gap: 4px; margin-top: 1px; padding-left: 4px; border: 1px solid #444; border-radius: 2px; background: #2a2a2a; color: #999; }
        .search input { flex: 1; min-width: 0; height: 9px; border: 0; padding: 0; background: none; color: #eee; font: inherit; }
        .search input::placeholder { color: #707070; }
        table { width: 100%; table-layout: fixed; border-collapse: collapse; font-weight: 600; }
        th { height: 16px; padding: 0 0 0 5px; text-align: left; font-weight: 600; white-space: nowrap; }
        th:first-child { padding-left: 3px; }
        th + th { background: linear-gradient(#444, #444) left center / 1px 9px no-repeat; }
        td { height: 10px; padding: 0 0 0 4px; line-height: 9px; }
        td:nth-child(1) { padding-left: 0; }
        td:nth-child(2) { padding-left: 3px; }
        td cad-icon { display: flex; }
        .on { background: #46638f; font-weight: 700; }
        .on td:nth-child(5) { background: #4a4a4a; }
      </style>
      <nav>
        ${["classes", "stack", "sheet", "vport", "docEye", "docRef"].map(n => `<button class="${n === "stack" ? "on" : ""}" aria-label="${n}">${icon(n, 12)}</button>`).join("")}
      </nav>
      <div class="opts">
        <prop-row kind="select" cols="48px 1fr" label="Layer Options:" value="Show/Snap Others" mark="updown" accent></prop-row>
        <prop-row kind="select" cols="48px 1fr" label="Filter:" value="&lt;All Layers&gt;" mark="updown" accent></prop-row>
        <label class="search">${icon("search", 8)}<input placeholder="Search" aria-label="Search layers"></label>
      </div>
      <table>
        <colgroup><col style="width:29px"><col style="width:13px"><col style="width:62px"><col style="width:17px"><col style="width:18px"><col></colgroup>
        <thead><tr><th>Visib...</th><th></th><th>Design Layer N...</th><th>#</th><th></th><th></th></tr></thead>
        <tbody>
          ${rows.map(([name, n]) => `
            <tr class="${n === 2 ? "on" : ""}">
              <td>${icon("eye", 9)}</td><td>${n === 2 ? icon("check", 8) : ""}</td><td>${name}</td><td>${n}</td><td></td><td></td>
            </tr>`).join("")}
        </tbody>
      </table>`;
  }
}

class StatusLine extends CadElement {
  html() {
    return `
      <style>
        :host { display: flex; align-items: center; height: 13px; padding-right: 78px; background: #1f1f24; white-space: nowrap; }
        .tool { margin-left: -2px; }
        b { margin: 0 6px; }
        .x { margin-left: auto; width: 99px; }
      </style>
      <span class="tool">Selection Tool</span><b>X</b><span>Rectangular Marquee Mode</span>
      <span class="x">X: -4.13</span><span>Y: 4.04</span>`;
  }
}

class CadApp extends CadElement {
  html() {
    return `
      <style>
        :host { display: grid; grid-template-rows: auto auto 1fr auto; height: 100vh; margin-right: 2px; overflow: hidden; }
        main { display: grid; grid-template-columns: 106px 1fr 170px; min-height: 0; }
        /* the left dock hangs a little over the window edge */
        .left { display: flex; flex-direction: column; margin-left: -6px; padding-right: 4px; background: #1a1a1a; overflow: hidden; }
        .left tool-grid { background: #303030; }
        .basic { height: 144px; }
        .left dock-panel + dock-panel { margin-top: 5px; }
        .lights { height: 53px; border-bottom: 1px solid #4a4a4a; }
        .left .sets { height: 62px; background: #272727; }
        .left .attrs { background: #272727; margin-top: 3px; flex: 1; }
        .center { display: grid; grid-template-rows: auto 1fr; min-width: 0; min-height: 0; }
        .right { display: flex; flex-direction: column; padding: 0 1px 0 4px; background: #1f1f1f; min-height: 0; }
        object-info { height: 231px; }
        .right dock-panel + dock-panel { flex: 1; margin-top: 3px; background: #1c1c1c; }
      </style>
      <ribbon-bar></ribbon-bar>
      <mode-bar></mode-bar>
      <main>
        <div class="left">
          <dock-panel label="Basic">
            <tool-grid class="basic" active="arrow" fly="hand callout tri poly eraser" tools="arrow hand orbit zoom text callout locus push line dline rect rrect circle ellipse tri spiral freeform poly dpoly hexagon rings dropper wand pickEye clip shear rotate mirror knife trim scissors fillet chamfer offset eraser edit dim dimA protract arcDim diam tape half film brush"></tool-grid>
          </dock-panel>
          <dock-panel label="Tool Sets">
            <tool-grid class="lights" size="13" tools="light lightC lightT focus bar point lnk panelLux lux spools"></tool-grid>
            <tool-grid class="sets" active="spot" tools="plan spot bolt truss stage cable door pipe house glass cam cab beam ibeam bolt2 gears"></tool-grid>
          </dock-panel>
          <dock-panel class="attrs" label="Attributes" help>
            <attribute-pane></attribute-pane>
          </dock-panel>
        </div>
        <div class="center">
          <file-tabs></file-tabs>
          <drawing-view></drawing-view>
        </div>
        <div class="right">
          <dock-panel label="Object Info - Shape" help><object-info></object-info></dock-panel>
          <dock-panel label="Navigation - Design Layers" help><navigation-pane></navigation-pane></dock-panel>
        </div>
      </main>
      <status-line></status-line>`;
  }
}

customElements.define("cad-icon", CadIcon);
customElements.define("drop-field", DropField);
customElements.define("ribbon-group", RibbonGroup);
customElements.define("ribbon-button", RibbonButton);
customElements.define("ribbon-bar", RibbonBar);
customElements.define("mode-bar", ModeBar);
customElements.define("dock-panel", DockPanel);
customElements.define("tool-grid", ToolGrid);
customElements.define("attribute-pane", AttributePane);
customElements.define("file-tabs", FileTabs);
customElements.define("drawing-view", DrawingView);
customElements.define("prop-row", PropRow);
customElements.define("object-info", ObjectInfo);
customElements.define("navigation-pane", NavigationPane);
customElements.define("status-line", StatusLine);
customElements.define("cad-app", CadApp);
</script>
</body>
</html>
